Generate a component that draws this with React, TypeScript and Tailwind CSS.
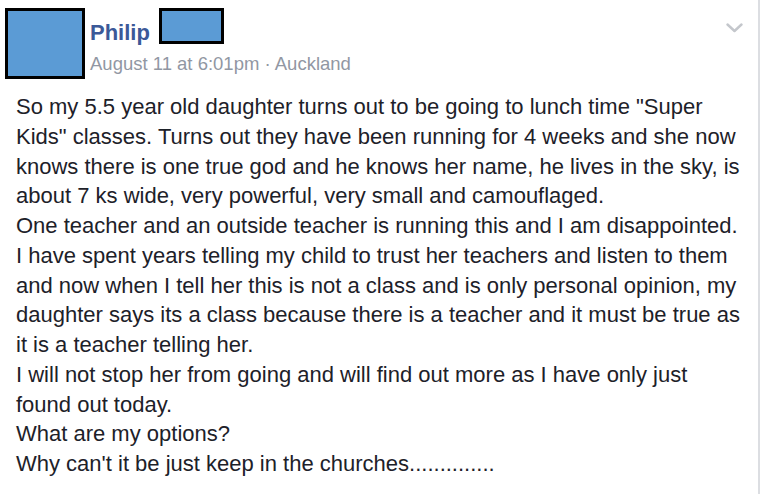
const bodyLines = [
  'So my 5.5 year old daughter turns out to be going to lunch time "Super',
  'Kids" classes. Turns out they have been running for 4 weeks and she now',
  "knows there is one true god and he knows her name, he lives in the sky, is",
  "about 7 ks wide, very powerful, very small and camouflaged.",
  "One teacher and an outside teacher is running this and I am disappointed.",
  "I have spent years telling my child to trust her teachers and listen to them",
  "and now when I tell her this is not a class and is only personal opinion, my",
  "daughter says its a class because there is a teacher and it must be true as",
  "it is a teacher telling her.",
  "I will not stop her from going and will find out more as I have only just",
  "found out today.",
  "What are my options?",
  "Why can't it be just keep in the churches..............",
];

function Chevron() {
  return (
    <svg width="17" height="10" viewBox="0 0 17 10" fill="none">
      <polyline
        points="1.5,1.5 8.5,8 15.5,1.5"
        stroke="#c4c7cc"
        strokeWidth="2.4"
        strokeLinecap="round"
        strokeLinejoin="round"
      />
    </svg>
  );
}

export default function App() {
  return (
    <div className="w-[763px] h-[494px] bg-white flex font-['Liberation_Sans',Arial,sans-serif] overflow-hidden">
      <div className="w-[760px] h-full border-r-2 border-[#dcdee2] flex flex-col">
        {/* header */}
        <div className="flex pl-[5px] pt-[8px]">
          <div className="w-[80px] h-[71px] border-[3px] border-black bg-[#5b9bd5]" />
          <div className="flex flex-col ml-[5px]">
            <div className="flex items-start">
              <span className="mt-[12px] text-[22px] leading-[26px] font-bold text-[#3b5998]">
                Philip
              </span>
              <div className="ml-[9px] w-[65px] h-[36px] border-[3px] border-black bg-[#5b9bd5]" />
            </div>
            <div className="mt-[7px] text-[18.5px] leading-[22px] text-[#9197a3]">
              August 11 at 6:01pm · Auckland
            </div>
          </div>
          <div className="ml-auto mr-[15px] mt-[15px]">
            <Chevron />
          </div>
        </div>

        {/* post body */}
        <div className="mt-[13px] pl-[16px] text-[22px] leading-[29.75px] text-[#1d2129] whitespace-pre">
          {bodyLines.map((line, i) => (
            <div key={i}>{line}</div>
          ))}
        </div>
      </div>
    </div>
  );
}
